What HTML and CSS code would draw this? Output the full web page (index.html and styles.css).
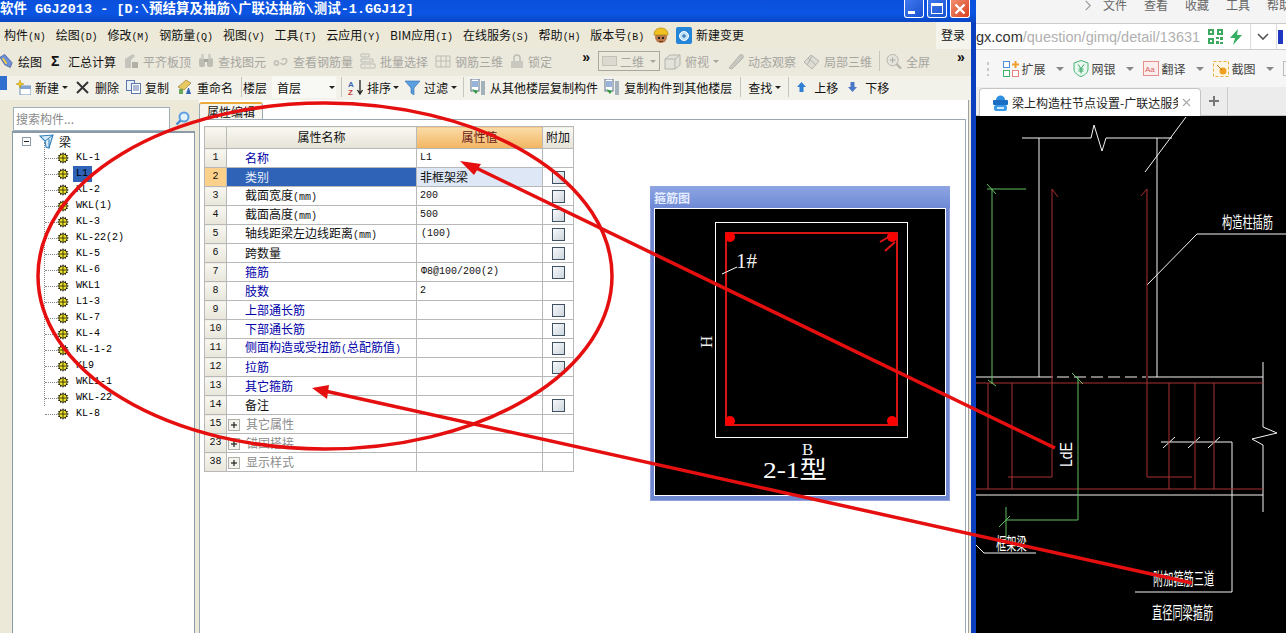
FILE: index.html
```html
<!DOCTYPE html>
<html lang="zh-CN">
  <head>
    <meta charset="UTF-8" />
    <title>GGJ2013</title>
    <link rel="stylesheet" href="styles.css">
  </head>
  <body>
    <svg class="defs" width="0" height="0">
      <symbol id="gear" viewBox="0 0 12 12">
        <path d="M6 0l1 2 2-1 0 2 2 0-1 2 2 1-2 1 1 2-2 0 0 2-2-1-1 2-1-2-2 1 0-2-2 0 1-2-2-1 2-1-1-2 2 0 0-2 2 1z" fill="#2a2a10"/>
        <circle cx="6" cy="6" r="3.6" fill="#f4e62a"/>
        <path d="M6 2.6v6.8M2.6 6h6.8" stroke="#3a3a10" stroke-width="1"/>
      </symbol>
      <symbol id="copyfloor" viewBox="0 0 16 16">
        <rect x="1" y="0" width="8" height="12" fill="#fff" stroke="#5a6f8c"/>
        <path d="M2 3h6M2 5h6M2 7h6" stroke="#3567b0"/>
        <path d="M2 10l4 5 2-3z" fill="#2f9a3a"/>
        <path d="M11 3h4M11 5h4M11 7h4M11 9h4M11 11h4M11 13h4M11 15h4" stroke="#54708c"/>
      </symbol>
    </svg>

    <div class="app">
      <div class="titlebar">
        <span class="title">软件 GGJ2013 - [D:\预结算及抽筋\广联达抽筋\测试-1.GGJ12]</span>
        <div class="winbtns">
          <span class="winbtn"><i class="min-mark"></i></span>
          <span class="winbtn"><i class="max-mark"></i></span>
          <span class="winbtn close">
            <svg width="12" height="12" viewBox="0 0 12 12"><path d="M1.5 1.5l9 9M10.5 1.5l-9 9" stroke="#fff" stroke-width="2.4"/></svg>
          </span>
        </div>
      </div>

      <div class="menubar">
        <span>构件<em>(N)</em></span>
        <span>绘图<em>(D)</em></span>
        <span>修改<em>(M)</em></span>
        <span>钢筋量<em>(Q)</em></span>
        <span>视图<em>(V)</em></span>
        <span>工具<em>(T)</em></span>
        <span>云应用<em>(Y)</em></span>
        <span>BIM应用<em>(I)</em></span>
        <span>在线服务<em>(S)</em></span>
        <span>帮助<em>(H)</em></span>
        <span>版本号<em>(B)</em></span>
        <svg class="helmet" width="16" height="17" viewBox="0 0 16 17">
          <circle cx="8" cy="10" r="6" fill="#b9794a"/>
          <path d="M1 8c0-5 3-7 7-7s7 2 7 7z" fill="#f0c020" stroke="#a07808" stroke-width=".6"/>
          <rect x="5" y="10" width="2" height="2" fill="#222"/><rect x="9" y="10" width="2" height="2" fill="#222"/>
          <rect x="6" y="14" width="4" height="1" fill="#7a3a20"/>
        </svg>
        <span class="change-item">
          <svg width="16" height="17" viewBox="0 0 16 17">
            <rect width="16" height="17" rx="2" fill="#2585d6"/>
            <circle cx="8" cy="9" r="4.5" fill="#bfe2f8" stroke="#fff"/>
            <path d="M6 9h4M8 7v4" stroke="#1a5fa0"/>
          </svg>
          新建变更
        </span>
        <span class="login">登录</span>
      </div>

      <div class="toolbar tb-one">
        <span class="tool first">
          <svg width="14" height="16" viewBox="0 0 15 16"><path d="M0 4l5-3 8 9-2 5-6-3z" fill="#6f8fd8" stroke="#2f4f8f" stroke-width=".7"/><path d="M3 5l4 6" stroke="#f0d040" stroke-width="2"/></svg>
          绘图
        </span>
        <span class="tool sum"><b class="sigma">Σ</b>汇总计算</span>
        <span class="tool off">
          <svg width="15" height="16" viewBox="0 0 15 16"><path d="M1 15V6l8-5 2 2-4 4v8z" fill="#c4c4bc"/><rect x="8" y="9" width="6" height="6" fill="#b0b0a8"/></svg>
          平齐板顶
        </span>
        <span class="tool off">
          <svg width="16" height="16" viewBox="0 0 16 16"><rect x="1" y="5" width="6" height="9" rx="2" fill="#bdbdb4"/><rect x="9" y="5" width="6" height="9" rx="2" fill="#bdbdb4"/><rect x="3" y="1" width="3" height="5" fill="#cfcfc8"/><rect x="10" y="1" width="3" height="5" fill="#cfcfc8"/><rect x="6" y="6" width="4" height="3" fill="#a8a8a0"/></svg>
          查找图元
        </span>
        <span class="tool off">
          <svg width="16" height="16" viewBox="0 0 15 16"><path d="M1 10c0-3 4-3 4 0s-4 3-4 0zM8 7c3-3 6-1 5 2s-4 3-6 1" fill="none" stroke="#c0c0b8" stroke-width="1.6"/></svg>
          查看钢筋量
        </span>
        <span class="tool off">
          <svg width="16" height="16" viewBox="0 0 16 16"><path d="M1 1h8v3H1zM1 6h12v3H1zM1 11h14v4H1z" fill="none" stroke="#bdbdb4"/><path d="M5 1v14M10 6v9" stroke="#cfcfc8"/></svg>
          批量选择
        </span>
        <span class="tool off">
          <svg width="16" height="16" viewBox="0 0 16 16"><path d="M1 3h14v11H1zM6 3v11M11 3v11M1 8h14" fill="none" stroke="#bdbdb4"/></svg>
          钢筋三维
        </span>
        <span class="tool off">
          <svg width="14" height="16" viewBox="0 0 14 16"><path d="M4 8V5c0-4 6-4 6 0v3" fill="none" stroke="#bdbdb4" stroke-width="1.5"/><rect x="1" y="8" width="12" height="7" fill="#c8c8c0"/></svg>
          锁定
        </span>
        <b class="more more-one">»</b>
        <span class="combo2d"><i></i>二维<u class="caret off-caret"></u></span>
        <span class="tool off view-tool">
          <svg width="17" height="17" viewBox="0 0 17 17"><path d="M1 6l5-4h10v10l-5 4H1zM1 6h10v10M11 6l5-4" fill="#e2e2da" stroke="#b4b4ac"/></svg>
          俯视<u class="caret off-caret"></u>
        </span>
        <span class="tool off">
          <svg width="16" height="17" viewBox="0 0 16 17"><path d="M1 15L12 2c3-1 4 1 3 3L4 16z" fill="#c8c8c0" stroke="#b4b4ac"/></svg>
          动态观察
        </span>
        <span class="tool off">
          <svg width="17" height="17" viewBox="0 0 17 17"><path d="M1 9l7-7 8 6-7 8z" fill="#dcdcd4" stroke="#b4b4ac"/><path d="M5 5l8 7M9 3l-5 9" stroke="#b4b4ac"/></svg>
          局部三维
        </span>
        <i class="sep"></i>
        <span class="tool off">
          <svg width="16" height="17" viewBox="0 0 17 17"><circle cx="7" cy="7" r="6" fill="#e4e4dc" stroke="#b4b4ac"/><path d="M4 7h6M7 4v6" stroke="#a8a8a0"/><path d="M11 11l5 5" stroke="#b4b4ac" stroke-width="2.4"/></svg>
          全屏
        </span>
        <b class="more more-two">»</b>
      </div>

      <div class="toolbar tb-two">
        <i class="dockbox"></i>
        <span class="tool">
          <svg width="16" height="15" viewBox="0 0 16 15"><rect x="5" y="6" width="11" height="9" fill="#fff" stroke="#6f8fb8"/><rect x="5" y="6" width="11" height="3" fill="#7fa4d4"/><path d="M5 0l1 3 3 1-3 1-1 3-1-3-3-1 3-1z" fill="#f0c820" stroke="#a88a10" stroke-width=".5"/></svg>
          新建<u class="caret"></u>
        </span>
        <span class="tool del-tool">
          <svg width="13" height="13" viewBox="0 0 13 13"><path d="M1 1l11 11M12 1L1 12" stroke="#333" stroke-width="2"/></svg>
          删除
        </span>
        <span class="tool">
          <svg width="15" height="14" viewBox="0 0 15 14"><rect x=".5" y=".5" width="8" height="10" fill="#eaf0fa" stroke="#5a78a8"/><rect x="5.5" y="3.5" width="9" height="10" fill="#fff" stroke="#5a78a8"/><path d="M7 6h6M7 8h6M7 10h6" stroke="#5a78a8"/></svg>
          复制
        </span>
        <span class="tool rename-tool">
          <svg width="16" height="16" viewBox="0 0 16 16"><path d="M1 8l8-7 5 3-7 7z" fill="#e8c860" stroke="#907020" stroke-width=".6"/><path d="M2 15V10h4v5z" fill="#6aa85a"/><path d="M9 15l2-6h1l2 6z" fill="#3567b0"/></svg>
          重命名
        </span>
        <i class="sep sep-tight"></i>
        <span class="floor-label">楼层</span>
        <span class="floor-combo">首层<u class="caret"></u></span>
        <i class="sep"></i>
        <span class="tool sort-tool">
          <svg width="16" height="17" viewBox="0 0 16 17"><text x="0" y="8" class="az az-a">A</text><text x="0" y="16" class="az az-z">Z</text><path d="M12 1v13M9.500 11l2.500 4 2.500-4" fill="none" stroke="#222" stroke-width="1.300"/></svg>
          排序<u class="caret"></u>
        </span>
        <span class="tool filter-tool">
          <svg width="15" height="15" viewBox="0 0 15 15"><path d="M0 1h15L9 8v7L6 13V8z" fill="#5aa0e0" stroke="#2f6cb0" stroke-width=".6"/></svg>
          过滤<u class="caret"></u>
        </span>
        <i class="sep"></i>
        <span class="tool copy-from-tool">
          <svg width="16" height="16"><use href="#copyfloor"/></svg>
          从其他楼层复制构件
        </span>
        <span class="tool">
          <svg width="16" height="16"><use href="#copyfloor"/></svg>
          复制构件到其他楼层
        </span>
        <i class="sep"></i>
        <span class="tool find-tool">查找<u class="caret"></u></span>
        <i class="sep"></i>
        <span class="tool move-tool">
          <svg width="9" height="10" viewBox="0 0 9 10"><path d="M4.500 0L9 5H6.500v5h-4V5H0z" fill="#2f7fd4"/></svg>
          上移
        </span>
        <span class="tool move-tool">
          <svg width="9" height="10" viewBox="0 0 9 10"><path d="M4.500 10L9 5H6.500V0h-4v5H0z" fill="#4a78c8"/></svg>
          下移
        </span>
      </div>

      <div class="workarea">
        <div class="sidepane">
          <div class="searchrow">
            <span class="searchbox">搜索构件...</span>
            <svg width="15" height="15" viewBox="0 0 15 15"><circle cx="9" cy="6" r="4.500" fill="#e4f2fc" stroke="#5aa0e0" stroke-width="2"/><path d="M5.500 9.500L1.500 13.500" stroke="#3f88d0" stroke-width="2.400"/></svg>
          </div>
          <div class="tree">
            <div class="tree-root">
              <span class="minus-box"><i></i></span>
              <svg width="15" height="15" viewBox="0 0 15 15"><path d="M1 2l13-1-4 13-3-1-1-6z" fill="#d8ecf8" stroke="#2f7fb8" stroke-width="1.100"/><path d="M6 7l8-6M10 14V5" stroke="#2f7fb8"/></svg>
              <span>梁</span>
            </div>
            <ul class="tree-kids">
              <li><i class="dash"></i><svg class="gear"><use href="#gear"/></svg><span>KL-1</span></li>
              <li><i class="dash"></i><svg class="gear"><use href="#gear"/></svg><span class="picked">L1</span></li>
              <li><i class="dash"></i><svg class="gear"><use href="#gear"/></svg><span>KL-2</span></li>
              <li><i class="dash"></i><svg class="gear"><use href="#gear"/></svg><span>WKL(1)</span></li>
              <li><i class="dash"></i><svg class="gear"><use href="#gear"/></svg><span>KL-3</span></li>
              <li><i class="dash"></i><svg class="gear"><use href="#gear"/></svg><span>KL-22(2)</span></li>
              <li><i class="dash"></i><svg class="gear"><use href="#gear"/></svg><span>KL-5</span></li>
              <li><i class="dash"></i><svg class="gear"><use href="#gear"/></svg><span>KL-6</span></li>
              <li><i class="dash"></i><svg class="gear"><use href="#gear"/></svg><span>WKL1</span></li>
              <li><i class="dash"></i><svg class="gear"><use href="#gear"/></svg><span>L1-3</span></li>
              <li><i class="dash"></i><svg class="gear"><use href="#gear"/></svg><span>KL-7</span></li>
              <li><i class="dash"></i><svg class="gear"><use href="#gear"/></svg><span>KL-4</span></li>
              <li><i class="dash"></i><svg class="gear"><use href="#gear"/></svg><span>KL-1-2</span></li>
              <li><i class="dash"></i><svg class="gear"><use href="#gear"/></svg><span>KL9</span></li>
              <li><i class="dash"></i><svg class="gear"><use href="#gear"/></svg><span>WKL1-1</span></li>
              <li><i class="dash"></i><svg class="gear"><use href="#gear"/></svg><span>WKL-22</span></li>
              <li><i class="dash"></i><svg class="gear"><use href="#gear"/></svg><span>KL-8</span></li>
            </ul>
          </div>
        </div>

        <div class="editor">
          <div class="tabstrip"><span class="tab">属性编辑</span></div>
          <div class="tabpanel">
            <table class="props">
              <colgroup><col class="c-num"><col class="c-name"><col class="c-val"><col class="c-add"></colgroup>
              <thead>
                <tr><th></th><th>属性名称</th><th class="hot">属性值</th><th>附加</th></tr>
              </thead>
              <tbody>
                <tr><td class="num">1</td><td class="name link">名称</td><td class="val mono">L1</td><td></td></tr>
                <tr class="current"><td class="num">2</td><td class="name">类别</td><td class="val">非框架梁</td><td><i class="check"></i></td></tr>
                <tr><td class="num">3</td><td class="name">截面宽度<em>(mm)</em></td><td class="val mono">200</td><td><i class="check"></i></td></tr>
                <tr><td class="num">4</td><td class="name">截面高度<em>(mm)</em></td><td class="val mono">500</td><td><i class="check"></i></td></tr>
                <tr><td class="num">5</td><td class="name">轴线距梁左边线距离<em>(mm)</em></td><td class="val mono inset">(100)</td><td><i class="check"></i></td></tr>
                <tr><td class="num">6</td><td class="name">跨数量</td><td class="val"></td><td><i class="check"></i></td></tr>
                <tr><td class="num">7</td><td class="name link">箍筋</td><td class="val mono inset">Φ8@100/200(2)</td><td><i class="check"></i></td></tr>
                <tr><td class="num">8</td><td class="name link">肢数</td><td class="val mono">2</td><td></td></tr>
                <tr><td class="num">9</td><td class="name link">上部通长筋</td><td class="val"></td><td><i class="check"></i></td></tr>
                <tr><td class="num">10</td><td class="name link">下部通长筋</td><td class="val"></td><td><i class="check"></i></td></tr>
                <tr><td class="num">11</td><td class="name link">侧面构造或受扭筋<em>(</em>总配筋值<em>)</em></td><td class="val"></td><td><i class="check"></i></td></tr>
                <tr><td class="num">12</td><td class="name link">拉筋</td><td class="val"></td><td><i class="check"></i></td></tr>
                <tr><td class="num">13</td><td class="name link">其它箍筋</td><td class="val"></td><td></td></tr>
                <tr><td class="num">14</td><td class="name">备注</td><td class="val"></td><td><i class="check"></i></td></tr>
                <tr><td class="num">15</td><td class="name group"><i class="plus"></i>其它属性</td><td class="val"></td><td></td></tr>
                <tr><td class="num">23</td><td class="name group"><i class="plus"></i>锚固搭接</td><td class="val"></td><td></td></tr>
                <tr><td class="num">38</td><td class="name group"><i class="plus"></i>显示样式</td><td class="val"></td><td></td></tr>
              </tbody>
            </table>
          </div>
        </div>
      </div>
    </div>

    <div class="browser">
      <div class="br-top">
        <svg width="8" height="11" viewBox="0 0 8 12"><path d="M1.500 1l5 5-5 5" fill="none" stroke="#999" stroke-width="1.200"/></svg>
        <span class="br-menu first-menu">文件</span>
        <span class="br-menu">查看</span>
        <span class="br-menu">收藏</span>
        <span class="br-menu">工具</span>
        <span class="br-menu">帮助</span>
      </div>
      <div class="br-address">
        <span class="url"><b>gx.com</b>/question/gimq/detail/13631</span>
        <svg class="qr" width="15" height="15" viewBox="0 0 15 15"><path d="M0 0h6v6H0zM9 0h6v6H9zM0 9h6v6H0zM2 2v2h2V2zM11 2v2h2V2zM2 11v2h2v-2zM8 8h3v2H8zM12 8h3v3h-3zM8 12h3v3H8zM12 13h3v2h-3z" fill="#3fa860" fill-rule="evenodd"/></svg>
        <svg class="bolt" width="12" height="16" viewBox="0 0 12 16"><path d="M8 0L0 9h5l-2 7 9-10H7z" fill="#35b060"/></svg>
        <i class="br-sep"></i>
        <svg class="down" width="12" height="8" viewBox="0 0 12 8"><path d="M1 1l5 5 5-5" fill="none" stroke="#555" stroke-width="1.600"/></svg>
        <i class="br-sep end"></i>
        <i class="blue-cut"></i>
      </div>
      <div class="br-tools">
        <i class="grip"></i>
        <span class="br-tool">
          <svg width="16" height="16" viewBox="0 0 16 16"><rect x=".5" y=".5" width="6" height="6" fill="#fff" stroke="#4a8fd8"/><rect x=".5" y="9.500" width="6" height="6" fill="#fff" stroke="#45b070"/><rect x="9.500" y="9.500" width="6" height="6" fill="#fff" stroke="#e88080"/><path d="M12.500 0v7M9 3.500h7" stroke="#f0a030" stroke-width="2"/></svg>
          扩展<u class="br-caret"></u>
        </span>
        <span class="br-tool">
          <svg width="16" height="17" viewBox="0 0 16 17"><path d="M8 .5l7 2.500v6c0 4-4 6.500-7 7.500-3-1-7-3.500-7-7.500V3z" fill="#eafaf0" stroke="#40b070"/><path d="M5 4.500l3 4 3-4M8 8.500v5M5.500 9h5M5.500 11h5" fill="none" stroke="#35a565"/></svg>
          网银<u class="br-caret"></u>
        </span>
        <span class="br-tool">
          <svg width="16" height="15" viewBox="0 0 16 15"><rect x=".5" y=".5" width="15" height="14" fill="#fdeeee" stroke="#e89090"/><text x="2" y="11" class="aa">Aa</text></svg>
          翻译<u class="br-caret"></u>
        </span>
        <span class="br-tool">
          <svg width="16" height="16" viewBox="0 0 16 16"><rect x=".5" y=".5" width="15" height="15" fill="#fdf6e4" stroke="#e8b040" stroke-dasharray="3 2"/><circle cx="10" cy="10" r="3.500" fill="#f0a020"/><path d="M4 4l5 5" stroke="#b87810"/></svg>
          截图<u class="br-caret"></u>
        </span>
        <i class="tool-cut"></i>
      </div>
      <div class="br-tabs">
        <span class="br-tab">
          <svg width="15" height="16" viewBox="0 0 15 16"><path d="M3 5c0-6 9-6 9 0z" fill="#2f8fe0"/><rect x="0" y="5" width="15" height="5" rx="1" fill="#1a6fc4"/><rect x="1" y="10" width="13" height="6" rx="2" fill="#3a9ae8"/><rect x="4" y="12" width="7" height="2" fill="#cfe8fb"/></svg>
          <span class="br-tab-text">梁上构造柱节点设置-广联达服务</span>
          <svg width="9" height="9" viewBox="0 0 9 9"><path d="M1 1l7 7M8 1L1 8" stroke="#aaa" stroke-width="1.200"/></svg>
        </span>
        <svg class="br-plus" width="10" height="10" viewBox="0 0 10 10"><path d="M5 0v10M0 5h10" stroke="#777" stroke-width="2"/></svg>
        <i class="br-tabs-sep"></i>
      </div>

      <svg class="cad" viewBox="976 116 310 517" width="310" height="517">
        <g class="c-white">
          <path d="M1022 138H1091L1094 125L1102 151L1106 138H1172"/>
          <path d="M1039 138V377M1157 138V377"/>
          <path d="M1186 117L1145 172"/>
          <path d="M1147 285L1197 234H1286"/>
          <path d="M976 377H1053M1148 377H1263"/>
          <path d="M1057 377H1146" stroke-dasharray="12 5"/>
          <path d="M1263 362V427L1277 433L1252 439L1263 445V512"/>
          <path d="M976 495H1263"/>
          <path d="M1161 442H1232V592H1135"/>
          <path d="M1163 448L1175 437M1188 448L1200 437M1208 448L1220 437"/>
          <path d="M976 545L984 553H1036"/>
        </g>
        <g class="c-red">
          <path d="M1058 197L1052 189V477H1008"/>
          <path d="M1141 196L1147 189V477H1192"/>
          <path d="M976 383H1263M976 489H1263"/>
          <path d="M988 383V489M1012 383V489M1169 383V489M1195 383V489M1214 383V489"/>
        </g>
        <g class="c-green">
          <path d="M987 189H1026M992 189V384"/>
          <path d="M987 184L996 194M988 380L996 386"/>
          <path d="M1078 377V520H1006M1006 507V540"/>
          <path d="M999 527L1010 516M1072 373L1083 384"/>
        </g>
        <text class="cad-text" transform="translate(1222 228) scale(1 1.6)">构造柱插筋</text>
        <text class="cad-text" transform="translate(996 550) scale(1 1.7)">框架梁</text>
        <text class="cad-text" transform="translate(1153 585) scale(1 1.7)">附加箍筋三道</text>
        <text class="cad-text" transform="translate(1152 619) scale(1 1.7)">直径同梁箍筋</text>
        <text class="cad-lde" transform="translate(1072 467) rotate(-90) scale(1 1.2)">LdE</text>
      </svg>
    </div>

    <div class="stirrup-win">
      <div class="stirrup-title">箍筋图</div>
      <svg class="stirrup-pic" viewBox="654 208 292 288" width="292" height="288">
        <rect x="715.500" y="222.500" width="192" height="215" class="s-frame"/>
        <rect x="726" y="233" width="171" height="192" class="s-bar"/>
        <circle cx="730" cy="237" r="5" class="s-dot"/>
        <circle cx="892" cy="237" r="5" class="s-dot"/>
        <circle cx="730" cy="421" r="5" class="s-dot"/>
        <circle cx="892" cy="421" r="5" class="s-dot"/>
        <path d="M880 242L892 235M885 251L895 242" class="s-hook"/>
        <path d="M722 274L737 267" class="s-lead"/>
        <text x="736" y="268" class="s-label big">1#</text>
        <text transform="translate(712 348) rotate(-90)" class="s-label">H</text>
        <text x="802" y="455" class="s-label">B</text>
        <text x="763" y="478" class="s-type" textLength="64" lengthAdjust="spacingAndGlyphs">2-1型</text>
      </svg>
    </div>

    <svg class="marks" viewBox="0 0 1286 633" width="1286" height="633">
      <ellipse cx="325" cy="276" rx="287" ry="173"/>
      <path d="M1055 448L470 165"/>
      <path d="M1192 583L325 391"/>
      <polygon points="460,161 481,164 474,175"/>
      <polygon points="312,388 329,385 327,399"/>
    </svg>
  </body>
</html>
```

FILE: styles.css
```css
* {
  margin: 0;
  padding: 0;
  box-sizing: border-box;
}

html,
body {
  width: 1286px;
  height: 633px;
  overflow: hidden;
}

body {
  display: flex;
  position: relative;
  background: #000;
  font-family: "Noto Sans CJK SC", sans-serif;
  font-size: 12px;
  color: #111;
}

i,
em,
u {
  font-style: normal;
  text-decoration: none;
}

em {
  font-family: "Liberation Mono", monospace;
  font-size: 10px;
  line-height: 1;
}

svg {
  flex: none;
}

.defs {
  position: absolute;
}

/* main program window */
.app {
  width: 976px;
  height: 633px;
  display: flex;
  flex-direction: column;
  background: #ece9d8;
  border-right: 5px solid #0a3fc0;
}

.titlebar {
  height: 22px;
  display: flex;
  align-items: flex-start;
  justify-content: space-between;
  background: linear-gradient(#0a50dc, #0b55e4 60%, #0a46c4);
  margin-right: -5px;
  padding-right: 6px;
}

.title {
  font-family: "Liberation Mono", "Noto Sans CJK SC", monospace;
  font-size: 13.4px;
  font-weight: bold;
  letter-spacing: .1px;
  line-height: 20px;
  color: #fff;
  white-space: pre;
}

.winbtns {
  display: flex;
  gap: 3px;
}

.winbtn {
  width: 20px;
  height: 18px;
  display: flex;
  align-items: center;
  justify-content: center;
  background: linear-gradient(135deg, #3f78ee, #1a50d0);
  border: 1px solid #fff;
  border-top: none;
  border-radius: 0 0 3px 3px;
}

.winbtn.close {
  background: linear-gradient(135deg, #f09070, #d84020);
}

.min-mark {
  width: 7px;
  height: 3px;
  background: #fff;
  margin: 8px 6px 0 0;
}

.max-mark {
  width: 12px;
  height: 11px;
  border: 1px solid #fff;
  border-top-width: 3px;
}

.menubar {
  height: 27px;
  display: flex;
  align-items: center;
  gap: 10px;
  padding: 0 0 2px 4px;
}

.menubar em {
  letter-spacing: -.1px;
}

.helmet {
  margin-left: -1px;
  margin-top: 2px;
}

.change-item {
  display: flex;
  align-items: center;
  gap: 4px;
  margin-left: -3px;
}

.change-item svg {
  margin-top: 2px;
}

.login {
  margin: 0 0 -2px auto;
  height: 27px;
  line-height: 25px;
  padding: 0 6px 0 5px;
  background: #f4f3ec;
}

.toolbar {
  display: flex;
  align-items: center;
  white-space: nowrap;
}

.tb-one {
  height: 27px;
  padding-bottom: 3px;
  background: #ebe8dc;
}

.tb-two {
  height: 24px;
  padding-bottom: 2px;
  background: #f3f2ea;
}

.tool {
  display: flex;
  align-items: center;
  gap: 4px;
  margin-right: 8px;
}

.tool.off {
  color: #a6a6a0;
  margin-right: 7px;
}

.tool.first {
  margin-right: 9px;
}

.tool.sum {
  gap: 7px;
  margin-right: 8px;
}

.sigma {
  width: 10px;
  font-size: 14px;
  font-family: "Liberation Sans", sans-serif;
}

.more {
  font-family: "Liberation Sans", sans-serif;
  font-size: 14px;
  line-height: 14px;
}

.more-one {
  margin: -8px 8px 0 23px;
}

.more-two {
  margin: -8px 0 0 20px;
}

.combo2d {
  width: 62px;
  height: 20px;
  display: flex;
  align-items: center;
  gap: 3px;
  padding-left: 3px;
  margin: 0 4px 0 0;
  border: 1px solid #aaa89e;
  color: #a6a6a0;
}

.combo2d i {
  width: 15px;
  height: 10px;
  background: #dcdad0;
  border: 1px solid #c4c2b8;
}

.tool.off.view-tool {
  margin-right: 9px;
}

.caret {
  width: 0;
  height: 0;
  margin-left: -1px;
  border: 3px solid transparent;
  border-top: 3px solid #222;
  border-bottom: none;
}

.off-caret {
  border-top-color: #a6a6a0;
  margin-left: 0;
}

.combo2d .off-caret {
  margin-left: 3px;
}

.sep {
  width: 1px;
  height: 20px;
  margin: 0 6px 0 0;
  background: #c8c6ba;
}

.sep-tight {
  margin-right: 1px;
}

.dockbox {
  width: 7px;
  height: 14px;
  margin: -8px 8px 0 0;
  background: #2f6fd0;
}

.del-tool {
  gap: 6px;
  margin-right: 7px;
}

.floor-label {
  margin-right: 5px;
}

.floor-combo {
  width: 64px;
  height: 22px;
  display: flex;
  align-items: center;
  justify-content: space-between;
  padding: 0 1px 0 5px;
  margin-right: 5px;
  background: #f8f8f4;
}

.sort-tool {
  gap: 3px;
  margin-right: 6px;
}

.filter-tool {
  margin-right: 6px;
}

.copy-from-tool {
  margin-right: 6px;
}

.az {
  font-family: "Liberation Sans", sans-serif;
  font-size: 8px;
  font-weight: bold;
}

.az-a {
  fill: #3567b0;
}

.az-z {
  fill: #c04040;
}

.find-tool {
  margin: 0 7px 0 1px;
}

.move-tool {
  gap: 8px;
  margin-left: 2px;
}

/* left tree and property table */
.workarea {
  flex: 1;
  min-height: 0;
  display: flex;
}

.sidepane {
  width: 199px;
  padding: 6px 4px 0 12px;
  display: flex;
  flex-direction: column;
}

.searchrow {
  height: 25px;
  display: flex;
  align-items: center;
  gap: 5px;
}

.searchrow .searchbox {
  width: 157px;
  height: 24px;
  line-height: 22px;
  margin-left: 1px;
  padding-left: 2px;
  background: #fff;
  border: 1px solid #9fb0bc;
  color: #8a8a8a;
}

.tree {
  flex: 1;
  background: #fff;
  border: 1px solid #8a9aa6;
  border-width: 2px 1px 0;
}

.tree-root {
  height: 16px;
  display: flex;
  align-items: center;
  padding-left: 9px;
}

.tree-root svg {
  margin: 0 5px 0 8px;
}

.minus-box {
  width: 9px;
  height: 9px;
  display: flex;
  align-items: center;
  justify-content: center;
  border: 1px solid #8a9aa6;
}

.minus-box i {
  width: 5px;
  height: 1px;
  background: #222;
}

.tree-kids {
  list-style: none;
  margin-left: 31px;
  border-left: 1px dotted #888;
  height: 264px;
  margin-top: -7px;
  padding-top: 8px;
}

.tree-kids li {
  height: 16px;
  display: flex;
  align-items: center;
  font-family: "Liberation Mono", monospace;
  font-size: 10px;
  white-space: pre;
  color: #000;
}

.dash {
  width: 12px;
  border-top: 1px dotted #888;
}

.gear {
  width: 12px;
  height: 12px;
  margin-right: 5px;
}

.tree-kids span {
  height: 16px;
  line-height: 16px;
  padding: 0 1px;
  margin-left: 1px;
}

.tree-kids .picked {
  width: 19px;
  background: #2f63b8;
  margin-left: -1px;
  padding-left: 3px;
}

.editor {
  flex: 1;
  display: flex;
  flex-direction: column;
  background: #fff;
  border-right: 1px solid #a0a0a0;
  margin-right: 2px;
}

.tabstrip {
  height: 20px;
  padding-top: 2px;
  background: #fff;
}

.tab {
  display: block;
  width: 64px;
  height: 18px;
  padding-left: 7px;
  line-height: 16px;
  background: #f8f6ec;
  border: 1px solid #9aa8b4;
  border-top: 2px solid #eda83a;
  border-bottom: none;
  border-radius: 3px 3px 0 0;
}

.tabpanel {
  flex: 1;
  margin: -1px 2px 0 0;
  padding: 6px 0 0 4px;
  border: 1px solid #9aa8b4;
  border-bottom: none;
  background: #fff;
}

.props {
  width: 370px;
  table-layout: fixed;
  border-collapse: collapse;
}

.c-num {
  width: 22px;
}

.c-name {
  width: 190px;
}

.c-val {
  width: 126px;
}

.c-add {
  width: 31px;
}

.props th,
.props td {
  height: 19px;
  border: 1px solid #b8b8b8;
  font-weight: normal;
  white-space: nowrap;
  overflow: hidden;
  line-height: 14px;
  padding-bottom: 1px;
}

.props th {
  height: 22px;
  background: linear-gradient(#f9f8f2, #e6e3d6);
  border-bottom: none;
}

.props th.hot {
  background: linear-gradient(#fbdca8, #f1b560);
  color: #6a1a1a;
}

.props .num {
  background: linear-gradient(#f8f7f1, #e8e6da);
  text-align: center;
  font-family: "Liberation Mono", monospace;
  font-size: 10px;
}

.props .name {
  padding-left: 18px;
}

.props .name.group {
  padding-left: 1px;
  color: #8c8c8c;
}

.props .link {
  color: #0000a8;
}

.props .val {
  padding-left: 3px;
}

.props .mono {
  font-family: "Liberation Mono", "Noto Sans CJK SC", monospace;
  font-size: 10px;
}

.props .val.inset {
  padding-left: 4px;
}

.current .name,
.current .name.link {
  background: #2f63b8;
  color: #e8eefa;
}

.current .val {
  background: #dde7f5;
}

.props .current .num {
  background: #fbd08a;
}

.check {
  display: block;
  width: 13px;
  height: 13px;
  margin: 1px auto 0;
  background: linear-gradient(135deg, #f8fafc, #cdd6dc);
  border: 1px solid #3f5060;
}

.plus {
  display: inline-block;
  position: relative;
  width: 12px;
  height: 12px;
  margin-right: 6px;
  vertical-align: -2px;
  background: #f4f4ee;
  border: 1px solid #b0b0a8;
}

.plus::before {
  content: "";
  position: absolute;
  left: 2px;
  top: 4px;
  width: 6px;
  height: 2px;
  background: #222;
  transform: scaleY(.6);
}

.plus::after {
  content: "";
  position: absolute;
  left: 4px;
  top: 2px;
  width: 2px;
  height: 6px;
  background: #222;
  transform: scaleX(.6);
}

/* browser window behind */
.browser {
  width: 310px;
  height: 633px;
  display: flex;
  flex-direction: column;
  background: #000;
}

.br-top {
  height: 23px;
  display: flex;
  align-items: flex-start;
  padding-left: 108px;
  background: #f4f4f4;
  color: #666;
  line-height: 10px;
  white-space: nowrap;
}

.br-menu {
  margin-left: 17px;
  flex: none;
}

.first-menu {
  margin-left: 11px;
}

.br-address {
  height: 27px;
  display: flex;
  align-items: center;
  background: #fff;
  border-top: 1px solid #ccc;
  border-bottom: 1px solid #ccc;
  white-space: nowrap;
}

.url {
  width: 232px;
  font-family: "Liberation Sans", sans-serif;
  font-size: 14.5px;
  color: #b0b0b0;
}

.url b {
  font-weight: normal;
  color: #333;
}

.qr {
  margin-right: 7px;
}

.bolt {
  margin-right: 8px;
}

.br-sep {
  width: 1px;
  height: 25px;
  background: #ddd;
}

.down {
  margin: 0 7px 0 6px;
}

.br-sep.end {
  margin-right: 1px;
}

.blue-cut {
  width: 5px;
  height: 14px;
  background: #2038c0;
}

.br-tools {
  height: 37px;
  display: flex;
  align-items: center;
  padding-left: 11px;
  background: #f6f6f6;
}

.grip {
  width: 3px;
  height: 14px;
  margin-right: 14px;
  background: repeating-linear-gradient(#c8c8c8 0 3px, transparent 3px 6px);
}

.br-tool {
  width: 70px;
  flex: none;
  display: flex;
  align-items: center;
  gap: 3px;
  color: #444;
}

.br-caret {
  width: 0;
  height: 0;
  margin-left: 7px;
  border: 4px solid transparent;
  border-top: 4px solid #888;
  border-bottom: none;
}

.aa {
  font-family: "Liberation Sans", sans-serif;
  font-size: 8px;
  fill: #d86060;
}

.tool-cut {
  width: 6px;
  height: 15px;
  border: 1px solid #bbb;
  border-right: none;
}

.br-tabs {
  height: 29px;
  display: flex;
  align-items: flex-end;
  padding-left: 3px;
  background: #ececec;
  border-bottom: 1px solid #c4c4c4;
}

.br-tab {
  width: 222px;
  height: 28px;
  display: flex;
  align-items: center;
  padding-left: 13px;
  background: #fff;
  border: 1px solid #c4c4c4;
  border-bottom: none;
  border-radius: 4px 4px 0 0;
  margin-bottom: -1px;
  color: #222;
}

.br-tab-text {
  width: 166px;
  margin: 0 4px 0 4px;
  overflow: hidden;
  white-space: nowrap;
}

.br-plus {
  margin: 0 0 9px 8px;
}

.br-tabs-sep {
  width: 1px;
  height: 28px;
  margin-left: 8px;
  background: #ccc;
}

.cad {
  display: block;
  flex: none;
}

.cad path {
  fill: none;
  stroke-width: 1;
}

.c-white path {
  stroke: #f4f4f4;
}

.c-red path {
  stroke: #a83030;
}

.c-green path {
  stroke: #62c060;
}

.cad-text {
  fill: #fff;
  font-size: 10.2px;
}

.cad-lde {
  fill: #fff;
  font-family: "Liberation Sans", sans-serif;
  font-size: 14px;
}

/* floating stirrup window */
.stirrup-win {
  position: absolute;
  left: 650px;
  top: 186px;
  width: 300px;
  height: 315px;
  padding: 0 4px 5px;
  background: #6f86d0;
  box-shadow: inset 0 0 0 1px #8fa0dc;
}

.stirrup-title {
  height: 22px;
  line-height: 24px;
  margin: 0 -4px;
  padding-left: 4px;
  background: linear-gradient(#8ea5e2, #6e8ad6);
  color: #e4ecff;
  font-weight: bold;
}

.stirrup-pic {
  display: block;
  background: #000;
  outline: 1px solid #fff;
  outline-offset: -1px;
}

.s-frame {
  fill: none;
  stroke: #fff;
}

.s-bar {
  fill: none;
  stroke: #d81414;
  stroke-width: 2;
}

.s-dot {
  fill: #f00;
}

.s-hook {
  stroke: #e01414;
  stroke-width: 2;
}

.s-lead {
  stroke: #fff;
}

.s-label {
  fill: #f0f0f0;
  font-family: "Liberation Serif", serif;
  font-size: 17px;
}

.s-label.big {
  font-size: 21px;
}

.s-type {
  fill: #fff;
  font-family: "Liberation Serif", "Noto Sans CJK SC", serif;
  font-size: 24px;
}

/* red hand-drawn notes over the whole screen */
.marks {
  position: absolute;
  left: 0;
  top: 0;
  pointer-events: none;
}

.marks ellipse,
.marks path {
  fill: none;
  stroke: #e50f0f;
  stroke-width: 3.5;
}

.marks polygon {
  fill: #e50f0f;
}
```
